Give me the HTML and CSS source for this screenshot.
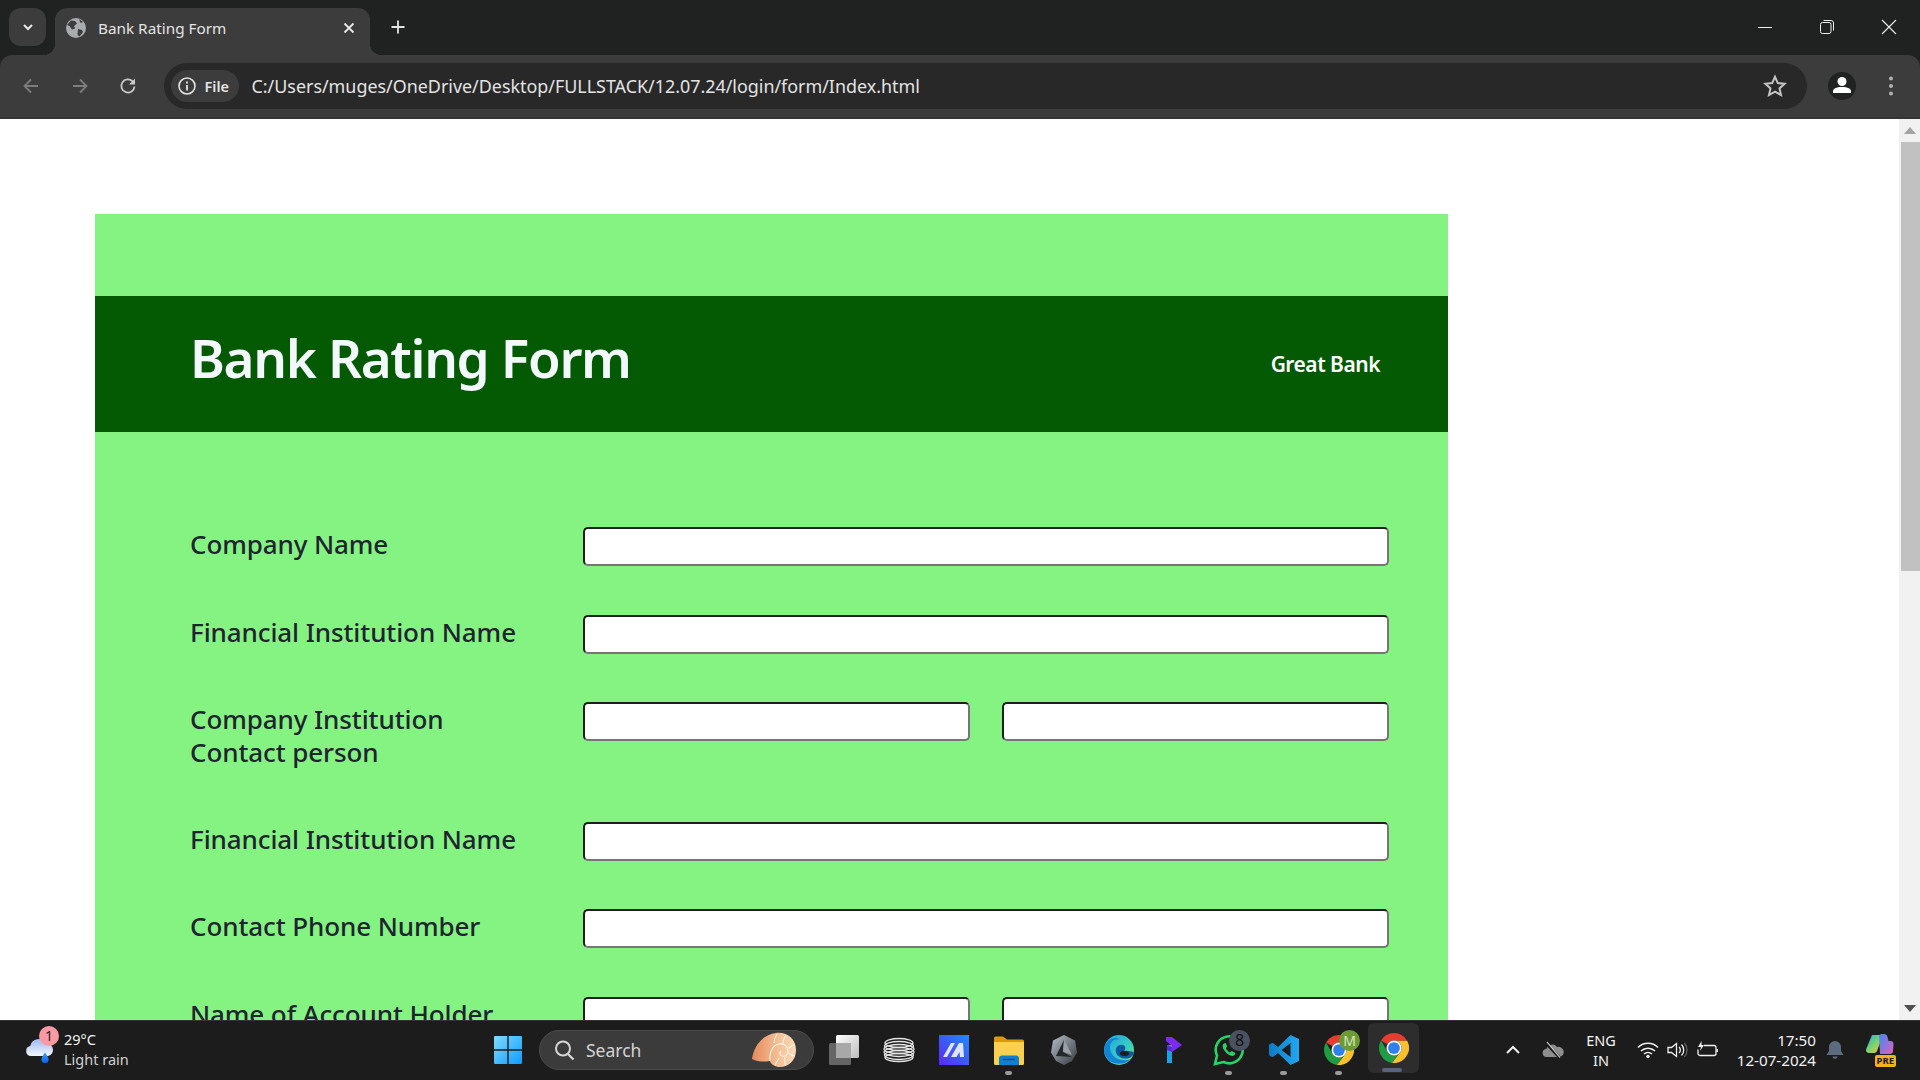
FILE: index.html
```html
<!DOCTYPE html>
<html lang="en">
<head>
<meta charset="utf-8">
<title>Bank Rating Form</title>
<link rel="stylesheet" href="styles.css">
</head>
<body>
<svg class="defs" width="0" height="0" aria-hidden="true">
  <symbol id="chrome" viewBox="0 0 24 24">
    <path fill="#1f9d45" d="M1.61 6A12 12 0 0 0 10.4 23.9L15.5 16.5 12 18A6 6 0 0 1 6.8 15Z"/>
    <path fill="#fbc02d" d="M22.39 6A12 12 0 0 1 10.4 23.9L17.2 15A6 6 0 0 0 12 6Z"/>
    <path fill="#e53d30" d="M12 0A12 12 0 0 1 22.39 6H12A6 6 0 0 0 6.8 9L1.61 6A12 12 0 0 1 12 0Z"/>
    <circle cx="12" cy="12" r="6" fill="#fff"/>
    <circle cx="12" cy="12" r="4.7" fill="#2f80ed"/>
  </symbol>
</svg>

<div class="tabstrip">
  <div class="tabs-menu">
    <svg width="14" height="14" viewBox="0 0 14 14"><path d="M3 5l4 4 4-4" fill="none" stroke="#e8e8e8" stroke-width="2"/></svg>
  </div>
  <div class="tab">
    <svg class="favicon" width="20" height="20" viewBox="0 0 20 20"><circle cx="10" cy="10" r="10" fill="#a9abae"/><path d="M5 2.5l4 .5 2 2.5-3 2.5 1 2.500-3 1-2.5-3.500-2.5-1zM12 11l4 1 1 2-3.500 4.500-2-1.500zM13 1l4 3-2.500 1z" fill="#3c3c3c"/></svg>
    <span class="tab-title">Bank Rating Form</span>
    <svg class="tab-close" width="12" height="12" viewBox="0 0 12 12"><path d="M1.5 1.5l9 9m0-9l-9 9" stroke="#e8e8e8" stroke-width="1.8"/></svg>
  </div>
  <svg class="new-tab" width="16" height="16" viewBox="0 0 16 16"><path d="M8 1.5v13M1.5 8h13" stroke="#e3e3e3" stroke-width="1.8"/></svg>
  <div class="win-controls">
    <div class="win-btn"><svg width="16" height="16" viewBox="0 0 16 16"><path d="M1 8.5h14" stroke="#eee" stroke-width="1"/></svg></div>
    <div class="win-btn"><svg width="16" height="16" viewBox="0 0 16 16"><rect x="1.5" y="3.5" width="10.5" height="11" rx="2" fill="none" stroke="#eee"/><path d="M4.5 1.500h7.500a2.500 2.500 0 0 1 2.500 2.500v7.500" fill="none" stroke="#eee"/></svg></div>
    <div class="win-btn"><svg width="16" height="16" viewBox="0 0 16 16"><path d="M1 1l14 14M15 1L1 15" stroke="#eee" stroke-width="1.1"/></svg></div>
  </div>
</div>

<div class="toolbar">
  <div class="nav-btn"><svg width="20" height="20" viewBox="0 0 20 20"><path d="M17 10H4m6-6.500L3.500 10l6.500 6.500" fill="none" stroke="#7d7d7d" stroke-width="1.8"/></svg></div>
  <div class="nav-btn"><svg width="20" height="20" viewBox="0 0 20 20"><path d="M3 10h13m-6-6.500l6.500 6.500-6.500 6.500" fill="none" stroke="#7d7d7d" stroke-width="1.8"/></svg></div>
  <div class="nav-btn"><svg width="20" height="20" viewBox="0 0 20 20"><path d="M16.500 10.500a6.600 6.600 0 1 1-1.900-5.200L16.500 7" fill="none" stroke="#c8c8c8" stroke-width="1.8"/><path d="M17 2.500v6h-6z" fill="#c8c8c8"/></svg></div>
  <div class="omnibox">
    <div class="chip">
      <svg width="20" height="20" viewBox="0 0 20 20"><circle cx="10" cy="10" r="8" fill="none" stroke="#e3e3e3" stroke-width="1.6"/><path d="M10 9v5.500M10 5.500v2" stroke="#e3e3e3" stroke-width="1.8"/></svg>
      <span class="chip-text">File</span>
    </div>
    <span class="url">C:/Users/muges/OneDrive/Desktop/FULLSTACK/12.07.24/login/form/Index.html</span>
    <svg class="star" width="24" height="24" viewBox="0 0 24 24"><path d="M12 2.800l2.800 6.300 6.800.7-5.100 4.600 1.500 6.700-6-3.500-6 3.500 1.500-6.700L2.400 9.800l6.800-.7z" fill="none" stroke="#c4c4c4" stroke-width="2"/></svg>
  </div>
  <div class="avatar"><svg width="28" height="28" viewBox="0 0 28 28"><circle cx="14" cy="9.500" r="4.500" fill="#fff"/><path d="M5 21v-1.500c0-3 3-4.500 9-4.500s9 1.500 9 4.500V21z" fill="#fff"/></svg></div>
  <svg class="kebab" width="16" height="24" viewBox="0 0 16 24"><circle cx="8" cy="4.500" r="2" fill="#b0b0b0"/><circle cx="8" cy="12" r="2" fill="#b0b0b0"/><circle cx="8" cy="19.500" r="2" fill="#b0b0b0"/></svg>
</div>

<div class="viewport">
  <main class="page">
    <div class="panel">
      <header class="panel-head">
        <h1 class="panel-title">Bank Rating Form</h1>
        <span class="panel-brand">Great Bank</span>
      </header>
      <form class="panel-body">
        <div class="row"><label class="row-label">Company Name</label><div class="fields"><input class="field" type="text"></div></div>
        <div class="row"><label class="row-label">Financial Institution Name</label><div class="fields"><input class="field" type="text"></div></div>
        <div class="row"><label class="row-label row-label-tall">Company Institution<br>Contact person</label><div class="fields"><input class="field" type="text"><input class="field" type="text"></div></div>
        <div class="row"><label class="row-label">Financial Institution Name</label><div class="fields"><input class="field" type="text"></div></div>
        <div class="row"><label class="row-label">Contact Phone Number</label><div class="fields"><input class="field" type="text"></div></div>
        <div class="row"><label class="row-label">Name of Account Holder</label><div class="fields"><input class="field" type="text"><input class="field" type="text"></div></div>
      </form>
    </div>
  </main>
  <div class="scrollbar">
    <div class="scroll-arrow"><svg width="12" height="7" viewBox="0 0 12 7"><path d="M6 0l6 7H0z" fill="#a3a3a3"/></svg></div>
    <div class="scroll-track"><div class="scroll-thumb"></div></div>
    <div class="scroll-arrow"><svg width="12" height="7" viewBox="0 0 12 7"><path d="M6 7l6-7H0z" fill="#505050"/></svg></div>
  </div>
</div>

<footer class="taskbar">
  <div class="weather">
    <div class="weather-icon">
      <svg width="34" height="34" viewBox="0 0 34 34">
        <defs>
          <linearGradient id="cloudfill" x1="0" y1="0" x2="0" y2="1"><stop offset="0" stop-color="#9fb9f3"/><stop offset="1" stop-color="#f3f6ff"/></linearGradient>
          <linearGradient id="dropfill" x1="0" y1="0" x2="0" y2="1"><stop offset="0" stop-color="#3aa0ff"/><stop offset="1" stop-color="#0a5fe8"/></linearGradient>
        </defs>
        <path d="M7 24a5 5 0 0 1-.8-9.900A8.500 8.500 0 0 1 22 11.500a6.300 6.300 0 0 1 7 6.300A6 6 0 0 1 24 24z" fill="url(#cloudfill)"/>
        <path d="M21 20.500c2 3 3.600 5 3.600 7a3.600 3.600 0 0 1-7.200 0c0-2 1.600-4 3.600-7z" fill="url(#dropfill)"/>
      </svg>
      <span class="weather-badge">1</span>
    </div>
    <div class="weather-text"><span class="weather-temp">29°C</span><span class="weather-desc">Light rain</span></div>
  </div>

  <div class="slot">
    <svg width="30" height="30" viewBox="0 0 30 30">
      <defs><linearGradient id="winfill" x1="0" y1="0" x2="1" y2="1"><stop offset="0" stop-color="#7fdcff"/><stop offset="1" stop-color="#0f9bff"/></linearGradient></defs>
      <path fill="url(#winfill)" d="M1 2a1 1 0 0 1 1-1h12.300v13.300H1zM15.700 1H28a1 1 0 0 1 1 1v12.300H15.700zM1 15.700h13.300V29H2a1 1 0 0 1-1-1zM15.700 15.700H29V28a1 1 0 0 1-1 1H15.700z"/>
    </svg>
  </div>

  <div class="searchbox">
    <svg width="22" height="22" viewBox="0 0 22 22"><circle cx="10" cy="9.500" r="7" fill="none" stroke="#d6d6d6" stroke-width="2"/><path d="M15 15l5.500 5.500" stroke="#d6d6d6" stroke-width="2.2"/></svg>
    <span class="search-text">Search</span>
    <svg class="shell" width="46" height="36" viewBox="0 0 46 36">
      <defs><linearGradient id="shellfill" x1="0" y1="0.500" x2="1" y2="0.500"><stop offset="0" stop-color="#e58a5c"/><stop offset="0.6" stop-color="#f3c096"/><stop offset="1" stop-color="#f8dcb8"/></linearGradient></defs>
      <path d="M1 27C3 14 11 3 25 1c11-1.500 20 6 20 17 0 10-7 17-16 17-5 0-9-2.500-10-6-6 1-12 1-18-2z" fill="url(#shellfill)"/>
      <path d="M19 29c-1-9 3-16 9-17 6-1 9 3 9 7 0 4-3 6-6 5-2-.6-3-3-1-5M26 2c-2 3-3 6-3 9M35 3.500c-2 2-3 5-3 8.500M44 13c-2 0-4 1-6 3M44 24c-2-.5-4-1-6-2.500M34 33.500c0-3-.5-5 0-8M24 33c1-2 3-5 4-7" fill="none" stroke="#fff3e2" stroke-width="1.1"/>
    </svg>
  </div>

  <div class="pins">
    <div class="slot">
      <svg width="32" height="32" viewBox="0 0 32 32"><defs><linearGradient id="tv1" x1="0" y1="0" x2="1" y2="1"><stop offset="0" stop-color="#fff"/><stop offset="1" stop-color="#bdbdbd"/></linearGradient></defs><rect x="1" y="9" width="22" height="22" rx="1.5" fill="#656565"/><rect x="8" y="1" width="23" height="23" rx="1.5" fill="url(#tv1)"/><rect x="8" y="9" width="15" height="15" fill="#a8a8a8"/></svg>
    </div>
    <div class="slot">
      <svg width="32" height="26" viewBox="0 0 32 26"><g fill="none" stroke="#e4e4e4" stroke-width="1.3"><ellipse cx="16" cy="6" rx="14" ry="4.500"/><ellipse cx="16" cy="9" rx="14.500" ry="4.500"/><ellipse cx="16" cy="12" rx="15" ry="4.500"/><ellipse cx="16" cy="15" rx="15" ry="4.500"/><ellipse cx="16" cy="18" rx="14.500" ry="4.500"/><ellipse cx="16" cy="20.500" rx="14" ry="4"/></g></svg>
    </div>
    <div class="slot">
      <svg width="30" height="30" viewBox="0 0 30 30"><defs><linearGradient id="maf" x1="1" y1="0" x2="0" y2="1"><stop offset="0" stop-color="#1f8cff"/><stop offset="1" stop-color="#5a28f5"/></linearGradient></defs><rect width="30" height="30" fill="url(#maf)"/><path d="M4 22L12 8h4L8 22zM12 22L20 8h4l1 14h-4l-.5-5-3 5z" fill="#dfe4ff"/></svg>
    </div>
    <div class="slot">
      <svg width="30" height="30" viewBox="0 0 30 30"><path d="M0 3a1.500 1.500 0 0 1 1.500-1.500H9l4 3h15.500A1.500 1.500 0 0 1 30 6v5H0z" fill="#d99a06"/><path d="M0 7h30v21.500a1.500 1.500 0 0 1-1.500 1.500h-27A1.500 1.500 0 0 1 0 28.500z" fill="#fbd04e"/><path d="M5 30v-6.500a3 3 0 0 1 3-3h14a3 3 0 0 1 3 3V30z" fill="#0f7fd0"/><path d="M9 24.500h12" stroke="#0a4f96" stroke-width="1.5"/></svg>
      <span class="run-dot"></span>
    </div>
    <div class="slot">
      <svg width="26" height="30" viewBox="0 0 26 30"><defs><linearGradient id="hex" x1="0" y1="0" x2="1" y2="1"><stop offset="0" stop-color="#b8c0c8"/><stop offset="1" stop-color="#33383e"/></linearGradient></defs><path d="M13 0l11 5.500 2 12-5 8.500-8 4-8-4-5-8.500 2-12z" fill="url(#hex)"/><path d="M13 5L5 21l16 1-9-5z" fill="#24272b"/><path d="M13 5l8 15-9-3.500z" fill="#9aa1a8"/></svg>
    </div>
    <div class="slot">
      <svg width="30" height="30" viewBox="0 0 30 30"><defs><linearGradient id="edge1" x1="0" y1="0" x2="1" y2="1"><stop offset="0" stop-color="#1f9fe6"/><stop offset="0.6" stop-color="#38cfc0"/><stop offset="1" stop-color="#86e060"/></linearGradient></defs><circle cx="15" cy="15" r="15" fill="url(#edge1)"/><path d="M.3 17C-1 7 9 0 16 4.500c-6-1-10 2.500-10 8 0 9 10 15 20 12-6 7-23 6-25.700-7.500z" fill="#1284d8"/><path d="M29.800 17.500c-1 4.500-5 6.500-9.300 6C15 23 10.500 19 12 13.500c.8-3 4.500-4.500 7-3.500 3 1 3 5 .8 5.500 3 .8 7.300 0 10 2z" fill="#0c5aa6"/><ellipse cx="20.500" cy="18.500" rx="4.500" ry="2.400" fill="#1c1c1c"/></svg>
    </div>
    <div class="slot">
      <svg width="16" height="26" viewBox="0 0 16 26"><path d="M0 0h6l10 8-10 7V9L0 4z" fill="#7c2bf0"/><path d="M1 8h5v18H1z" fill="#18a3e8"/><path d="M1 8l5 2v5l-5-2z" fill="#5a2bd8"/></svg>
    </div>
    <div class="slot">
      <svg width="32" height="32" viewBox="0 0 32 32"><path d="M2 30l2-8.500A13.500 13.500 0 1 1 10.500 28z" fill="none" stroke="#27d366" stroke-width="2.6"/><path d="M11 9.500c-2 1.500-1.800 4.200.8 7.600s6 5.400 8.400 4.600c1.400-.5 2.300-1.800 2-2.800l-3.500-1.800-1.600 1.500c-1.500-.5-3.500-2.600-4.300-4.300l1.300-1.700L12.800 9z" fill="#27d366"/></svg>
      <span class="pin-badge pin-badge-gray">8</span>
      <span class="run-dot"></span>
    </div>
    <div class="slot">
      <svg width="30" height="30" viewBox="0 0 30 30"><defs><linearGradient id="vsc" x1="0" y1="0" x2="1" y2="0"><stop offset="0" stop-color="#0c7cc4"/><stop offset="1" stop-color="#22a7f0"/></linearGradient></defs><path d="M21.500 0L30 4v22l-8.500 4L9 18l-5.500 4.200L0 20.200V9.800l3.500-2L9 12zM21.500 8L12.500 15l9 7z" fill="url(#vsc)" fill-rule="evenodd"/></svg>
      <span class="run-dot"></span>
    </div>
    <div class="slot">
      <svg class="chrome-icon" width="30" height="30"><use href="#chrome"/></svg>
      <span class="pin-badge pin-badge-green">M</span>
      <span class="run-dot"></span>
    </div>
    <div class="slot slot-active">
      <svg class="chrome-icon" width="30" height="30"><use href="#chrome"/></svg>
      <span class="run-bar"></span>
    </div>
  </div>

  <div class="tray">
    <div class="tray-chevron"><svg width="16" height="10" viewBox="0 0 16 10"><path d="M2 8l6-6 6 6" fill="none" stroke="#f0f0f0" stroke-width="2"/></svg></div>
    <div class="tray-cloud"><svg width="22" height="18" viewBox="0 0 22 18"><path d="M5 16a4 4 0 0 1-.6-8A6 6 0 0 1 15 6a4.200 4.200 0 0 1 3 10z" fill="#8e8e8e"/><path d="M3 1l15 16" stroke="#1c1c1c" stroke-width="3"/><path d="M5 1l13 15.500" stroke="#e8e8e8" stroke-width="1.1"/></svg></div>
    <div class="tray-lang"><span>ENG</span><span>IN</span></div>
    <div class="tray-icon"><svg width="22" height="18" viewBox="0 0 22 18"><path d="M1 6.500a14 14 0 0 1 20 0M4 10a10 10 0 0 1 14 0M7 13a6 6 0 0 1 8 0" fill="none" stroke="#f0f0f0" stroke-width="1.5"/><circle cx="11" cy="15.500" r="1.700" fill="#f0f0f0"/></svg></div>
    <div class="tray-icon"><svg width="22" height="18" viewBox="0 0 22 18"><path d="M1 6.500h3.500L9.500 2.500v13l-5-4H1z" fill="none" stroke="#f0f0f0" stroke-width="1.3"/><path d="M12 6a4 4 0 0 1 0 6M14.500 3.500a8 8 0 0 1 0 11" fill="none" stroke="#f0f0f0" stroke-width="1.3"/><path d="M17.500 2a11 11 0 0 1 0 14" fill="none" stroke="#666" stroke-width="1.2"/></svg></div>
    <div class="tray-icon"><svg width="22" height="18" viewBox="0 0 22 18"><path d="M7 4.500h10a2 2 0 0 1 2 2v6a2 2 0 0 1-2 2H3a2 2 0 0 1-2-2v-4" fill="none" stroke="#f0f0f0" stroke-width="1.3"/><path d="M19.500 8h1.500v3h-1.500z" fill="#f0f0f0"/><path d="M4.500 0L1 6h3l-1 4 4-6H4.500z" fill="#f0f0f0"/></svg></div>
    <div class="clock"><span>17:50</span><span>12-07-2024</span></div>
    <div class="tray-bell"><svg width="18" height="20" viewBox="0 0 18 20"><path d="M9 1a6 6 0 0 1 6 6v4l2.500 4H.5L3 11V7a6 6 0 0 1 6-6z" fill="#5d6b80"/><path d="M6.500 16.500h5a2.500 2.500 0 0 1-5 0z" fill="#5d6b80"/></svg></div>
    <div class="copilot">
      <svg width="30" height="26" viewBox="0 0 30 26">
        <defs><linearGradient id="cop1" x1="0" y1="0" x2="1" y2="1"><stop offset="0" stop-color="#1ea7e8"/><stop offset="0.5" stop-color="#7bd46a"/><stop offset="1" stop-color="#f5c542"/></linearGradient><linearGradient id="cop2" x1="0" y1="0" x2="1" y2="1"><stop offset="0" stop-color="#3c8cf0"/><stop offset="1" stop-color="#e060c0"/></linearGradient></defs>
        <path d="M7 2h11l-6 16a3 3 0 0 1-3 2H4a3 3 0 0 1-3-3.500z" fill="url(#cop1)"/>
        <path d="M14 3a3 3 0 0 1 3-2h2c2 0 3 1 3.500 3l1 4h2a3 3 0 0 1 3 3L28 18a3 3 0 0 1-3 3H15z" fill="url(#cop2)"/>
      </svg>
      <span class="pre-tag">PRE</span>
    </div>
  </div>
</footer>
</body>
</html>
```

FILE: styles.css
```css
* { box-sizing: border-box; }

html, body {
  margin: 0;
  height: 100%;
  overflow: hidden;
}

body {
  display: flex;
  flex-direction: column;
  font-family: "Noto Sans", "Liberation Sans", sans-serif;
  background: #202221;
}

.defs { display: block; height: 0; }

/* Browser tab strip */
.tabstrip {
  flex: none;
  height: 55px;
  display: flex;
  align-items: flex-end;
  background: #202221;
  color: #e8e8e8;
}

.tabs-menu {
  width: 37px;
  height: 38px;
  margin: 0 9px 9px;
  display: flex;
  align-items: center;
  justify-content: center;
  border-radius: 12px;
  background: #3c3c3c;
}

.tab {
  position: relative;
  width: 315px;
  height: 47px;
  display: flex;
  align-items: center;
  padding: 0 15px 7px 11px;
  border-radius: 12px 12px 0 0;
  background: #3c3c3c;
}

.tab::before, .tab::after {
  content: "";
  position: absolute;
  bottom: 0;
  width: 12px;
  height: 12px;
}

.tab::before {
  left: -12px;
  background: radial-gradient(circle at 0 0, #202221 12px, #3c3c3c 12.5px);
}

.tab::after {
  right: -12px;
  background: radial-gradient(circle at 100% 0, #202221 12px, #3c3c3c 12.5px);
}

.favicon { flex: none; }

.tab-title {
  margin-left: 12px;
  font-size: 15.3px;
  color: #e3e3e3;
}

.tab-close { margin-left: auto; }

.new-tab {
  margin: 0 0 20px 20px;
}

.win-controls {
  margin-left: auto;
  align-self: stretch;
  display: flex;
  padding-bottom: 1px;
}

.win-btn {
  width: 62px;
  display: flex;
  align-items: center;
  justify-content: center;
}

/* Browser toolbar */
.toolbar {
  flex: none;
  height: 64px;
  display: flex;
  align-items: center;
  padding-left: 7px;
  border-radius: 12px 12px 0 0;
  border-bottom: 2px solid #343434;
  background: #3c3c3c;
}

.nav-btn {
  width: 48.5px;
  display: flex;
  justify-content: center;
}

.omnibox {
  width: 1643px;
  height: 46px;
  margin-left: 11px;
  display: flex;
  align-items: center;
  padding: 0 20px 0 7px;
  border-radius: 23px;
  background: #282828;
}

.chip {
  width: 68px;
  height: 32px;
  flex: none;
  display: flex;
  align-items: center;
  gap: 8px;
  padding-left: 6px;
  border-radius: 16px;
  background: #3c3c3c;
}

.chip-text {
  font-size: 14.5px;
  font-weight: 600;
  color: #e3e3e3;
}

.url {
  margin-left: 13px;
  font-size: 17.9px;
  color: #e3e3e3;
  white-space: nowrap;
}

.star { margin-left: auto; }

.avatar {
  width: 28px;
  height: 28px;
  margin-left: 21px;
  border-radius: 50%;
  background: #202221;
  overflow: hidden;
}

.avatar svg { display: block; }

.kebab { margin-left: 27px; }

/* Page viewport */
.viewport {
  flex: 1;
  min-height: 0;
  display: flex;
  overflow: hidden;
  background: #fff;
}

.page {
  flex: 1;
  min-width: 0;
  padding: 95px 0 0 95px;
}

.panel {
  width: 1353px;
  padding-top: 82px;
  background: #85f382;
}

.panel-head {
  height: 136px;
  display: flex;
  align-items: center;
  justify-content: space-between;
  padding: 0 68px 0 95px;
  background: #035a03;
}

.panel-title {
  margin: 0 0 14px;
  font-size: 53px;
  font-weight: 600;
  letter-spacing: -1.35px;
  color: #f3f8fc;
}

.panel-brand {
  font-size: 21px;
  font-weight: 600;
  letter-spacing: -0.5px;
  color: #fff;
}

.panel-body {
  padding: 95px 59px 0 95px;
}

.row {
  display: grid;
  grid-template-columns: 393px 1fr;
  margin-bottom: 48.5px;
}

.row-label {
  padding-top: 1px;
  font-size: 26px;
  line-height: 32.5px;
  font-weight: 500;
  letter-spacing: -0.1px;
  color: #1f2430;
}

.row-label-tall {
  min-height: 71px;
}

.fields {
  display: flex;
  gap: 32px;
}

.field {
  flex: 1;
  min-width: 0;
  height: 39px;
  padding: 0 8px;
  background: #fff;
  border: 2px solid;
  border-color: #1f1f1f #767676 #767676 #1f1f1f;
  border-radius: 5px;
}

/* Scrollbar */
.scrollbar {
  flex: none;
  width: 21px;
  display: flex;
  flex-direction: column;
  background: #f1f1f1;
}

.scroll-arrow {
  height: 23px;
  display: flex;
  align-items: center;
  justify-content: center;
}

.scroll-track {
  flex: 1;
  padding-left: 2px;
}

.scroll-thumb {
  height: 429px;
  background: #c1c1c1;
}

/* Taskbar */
.taskbar {
  flex: none;
  height: 60px;
  display: flex;
  align-items: center;
  padding-bottom: 2px;
  border-top: 1px solid #333;
  background: #1c1c1c;
  color: #f2f2f2;
}

.weather {
  width: 480px;
  display: flex;
  align-items: center;
  padding-left: 24px;
}

.weather-icon {
  position: relative;
  width: 34px;
  height: 34px;
  margin-top: -2px;
}

.weather-icon svg { display: block; }

.weather-badge {
  position: absolute;
  top: -6px;
  left: 15px;
  width: 20px;
  height: 20px;
  border-radius: 50%;
  background: #fb9aa2;
  color: #222;
  font-size: 14px;
  line-height: 20px;
  text-align: center;
}

.weather-text {
  display: flex;
  flex-direction: column;
  margin: -2px 0 0 6px;
  font-size: 14.5px;
  line-height: 20px;
}

.weather-desc { color: #d0d0d0; }

.slot {
  position: relative;
  flex: none;
  width: 55px;
  height: 54px;
  display: flex;
  align-items: center;
  justify-content: center;
}

.slot-active {
  width: 51px;
  height: 50px;
  margin-left: 2px;
  border-radius: 6px;
  background: #2d2d2d;
}

.searchbox {
  width: 275px;
  height: 40px;
  margin: 0 2px 0 4px;
  display: flex;
  align-items: center;
  padding: 0 16px 0 13px;
  border: 1px solid #4b4b4b;
  border-radius: 20px;
  background: #3b3b3b;
}

.search-text {
  margin-left: 11px;
  font-size: 17.5px;
  color: #d4d4d4;
}

.shell { margin-left: auto; }

.pins { display: flex; }

.run-dot {
  position: absolute;
  bottom: 2px;
  left: 24px;
  width: 7px;
  height: 4px;
  border-radius: 2px;
  background: #9a9a9a;
}

.run-bar {
  position: absolute;
  bottom: 1px;
  left: 14px;
  width: 20px;
  height: 4px;
  border-radius: 2px;
  background: #56657c;
}

.pin-badge {
  position: absolute;
  top: 7px;
  left: 28px;
  width: 21px;
  height: 21px;
  border-radius: 50%;
  color: #e8e8e8;
  font-size: 14px;
  line-height: 21px;
  text-align: center;
}

.pin-badge-gray { background: #4a5261; color: #111; font-size: 16px; }
.pin-badge-green { background: #6c9a34; color: #d7e6c0; }

.tray {
  margin-left: auto;
  display: flex;
  align-items: center;
  padding-right: 20px;
}

.tray-chevron, .tray-cloud {
  width: 40px;
  display: flex;
  justify-content: center;
}

.tray-lang {
  width: 56px;
  display: flex;
  flex-direction: column;
  align-items: center;
  font-size: 14.5px;
  line-height: 20px;
}

.tray-icon {
  width: 30px;
  display: flex;
  justify-content: center;
}

.tray-lang + .tray-icon { margin-left: 4px; }

.clock {
  width: 93px;
  display: flex;
  flex-direction: column;
  align-items: flex-end;
  font-size: 15.2px;
  line-height: 20px;
}

.tray-bell {
  width: 34px;
  margin: 0 8px 0 2px;
  display: flex;
  justify-content: center;
}

.copilot {
  position: relative;
  width: 40px;
  height: 34px;
  display: flex;
  justify-content: center;
}

.pre-tag {
  position: absolute;
  right: 4px;
  bottom: 0;
  padding: 0 2px;
  border-radius: 2px;
  background: #f2b21c;
  color: #1c1c1c;
  font-size: 9.5px;
  line-height: 12px;
  font-weight: 700;
}
```
